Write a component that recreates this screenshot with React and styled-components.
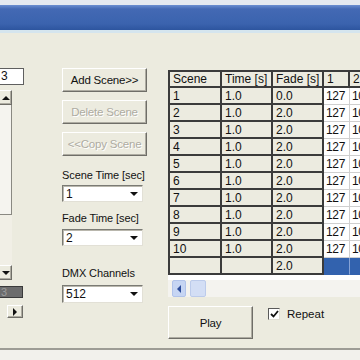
import styled, { createGlobalStyle } from "styled-components";

const GlobalStyle = createGlobalStyle`
  html, body { margin: 0; padding: 0; }
  body {
    width: 360px;
    height: 360px;
    overflow: hidden;
    background: #f2f1ec;
    font-family: "Liberation Sans", Arial, sans-serif;
    font-size: 11px;
    color: #111;
  }
`;

const Window = styled.div`
  width: 360px;
  height: 360px;
  display: flex;
  flex-direction: column;
  overflow: hidden;
`;

const TopStrip = styled.div`
  height: 5px;
  background: #e4e9f0;
`;

const TitleBar = styled.div`
  height: 25px;
  background: linear-gradient(#6b8fd1 0, #4369b4 4px, #3b63ae 75%, #2d559f 100%);
`;

const TitleEdge = styled.div`
  height: 3px;
  background: #d5e5ee;
`;

const Panel = styled.div`
  height: 315px;
  background: #ecebdf;
  display: flex;
  align-items: flex-start;
  overflow: hidden;
`;

const BottomEdge = styled.div`
  height: 2px;
  background: #9d9c95;
`;

const raised = `
  border: 1px solid;
  border-color: #ffffff #6f6e68 #6f6e68 #ffffff;
  box-shadow: inset -1px -1px #aeaca2;
`;

const Tri = styled.span`
  width: 0;
  height: 0;
  border-style: solid;
  ${(p) =>
    p.$dir === "up"
      ? "border-width: 0 4px 4px 4px; border-color: transparent transparent #111 transparent;"
      : p.$dir === "down"
      ? "border-width: 4px 4px 0 4px; border-color: #111 transparent transparent transparent;"
      : p.$dir === "right"
      ? "border-width: 4px 0 4px 4px; border-color: transparent transparent transparent #111;"
      : "border-width: 4px 4px 4px 0; border-color: transparent #2c4c9a transparent transparent;"}
`;

/* left column, mostly cut off by the window edge */
const LeftCol = styled.div`
  width: 24px;
  flex: none;
  margin-top: 35px;
  display: flex;
  flex-direction: column;
`;

const SpinInput = styled.div`
  height: 17px;
  box-sizing: border-box;
  border: 1px solid #5f5f5f;
  border-left: none;
  background: #fff;
  padding-left: 1px;
  line-height: 15px;
  font-size: 12px;
`;

const ListBar = styled.div`
  margin-top: 5px;
  width: 12px;
  height: 190px;
  display: flex;
  flex-direction: column;
`;

const ScrollBtn = styled.div`
  height: 15px;
  flex: none;
  box-sizing: border-box;
  background: #ecebdf;
  ${raised}
  border-left: none;
  display: flex;
  align-items: center;
  justify-content: center;
`;

const Thumb = styled.div`
  height: 110px;
  flex: none;
  box-sizing: border-box;
  background: #f5f4ef;
  border-right: 1px solid #8a8982;
  border-bottom: 1px solid #8a8982;
`;

const Track = styled.div`
  flex: 1;
  background: #f1efe6;
`;

const DarkField = styled.div`
  margin-top: 6px;
  width: 23px;
  height: 12px;
  box-sizing: border-box;
  background: #6c6c6c;
  border: 1px solid #3a3a3a;
  border-left: none;
  color: #9c9c9c;
  font-size: 11px;
  line-height: 10px;
  padding-left: 1px;
`;

const HScrollRow = styled.div`
  margin-top: 7px;
  width: 23px;
  height: 13px;
  display: flex;
  justify-content: flex-end;
`;

const SmallBtn = styled.div`
  width: 16px;
  box-sizing: border-box;
  background: #ecebdf;
  ${raised}
  display: flex;
  align-items: center;
  justify-content: center;
`;

/* middle column */
const MidCol = styled.div`
  margin-left: 38px;
  margin-top: 35px;
  width: 85px;
  flex: none;
  display: flex;
  flex-direction: column;
`;

const ButtonStack = styled.div`
  display: flex;
  flex-direction: column;
  gap: 8px;
`;

const ActionButton = styled.div`
  width: 85px;
  height: ${(p) => p.$h || 24}px;
  box-sizing: border-box;
  background: #ecebdf;
  ${raised}
  display: flex;
  align-items: center;
  justify-content: center;
  font-size: 11.5px;
  letter-spacing: -0.2px;
  color: ${(p) => (p.$disabled ? "#aeaca2" : "#111")};
  text-shadow: ${(p) => (p.$disabled ? "1px 1px #ffffff" : "none")};
`;

const FieldLabel = styled.div`
  margin-top: ${(p) => p.$mt}px;
  height: 14px;
  line-height: 14px;
  white-space: nowrap;
  letter-spacing: -0.1px;
`;

const Combo = styled.div`
  margin-top: ${(p) => p.$mt}px;
  width: 81px;
  height: ${(p) => p.$h || 17}px;
  box-sizing: border-box;
  background: #fff;
  border: 1px solid;
  border-color: #7a7a74 #e2e0d6 #e2e0d6 #7a7a74;
  box-shadow: inset 1px 1px #b9b7ad;
  display: flex;
  align-items: center;
  justify-content: space-between;
  padding: 0 4px 0 3px;
  font-size: 12px;
`;

/* table column */
const TableCol = styled.div`
  margin-left: 21px;
  margin-top: 37px;
  flex: 1;
  min-width: 0;
  display: flex;
  flex-direction: column;
`;

const GridBox = styled.div`
  height: 227px;
  background: #fff;
  display: flex;
  flex-direction: column;
  overflow: hidden;
`;

const Grid = styled.div`
  display: grid;
  grid-template-columns: 52px 51px 51px 26px 60px;
  grid-auto-rows: 17px;
  grid-template-rows: 16px;
  border-left: 2px solid #3b3b3b;
  border-top: 2px solid #3b3b3b;
  width: max-content;
  font-size: 12px;
`;

const cellTheme = {
  fixed: "background: #ecebe0; border-right: 2px solid #3b3b3b; border-bottom: 2px solid #3b3b3b;",
  head: "background: #ecebe0; border-right: 2px solid #3b3b3b; border-bottom: 2px solid #3b3b3b;",
  data: "background: #ffffff; border-right: 1px solid #cfcfcf; border-bottom: 1px solid #cfcfcf; padding-left: 2px; letter-spacing: -0.3px;",
  sel: "background: #3262ae; border-right: 1px solid #86a3d6; border-bottom: 1px solid #3262ae;",
};

const Cell = styled.div`
  box-sizing: border-box;
  padding-left: 3px;
  white-space: nowrap;
  overflow: hidden;
  display: flex;
  align-items: center;
  ${(p) => cellTheme[p.$kind]}
`;

const WhiteGap = styled.div`
  flex: 1;
`;

const HScroll = styled.div`
  height: 17px;
  flex: none;
  background: #f4f3ef;
  display: flex;
  align-items: stretch;
  padding-left: 4px;
  gap: 4px;
`;

const HArrow = styled.div`
  width: 14px;
  box-sizing: border-box;
  background: #c6d5f3;
  border: 1px solid #b1c3ea;
  border-radius: 2px;
  display: flex;
  align-items: center;
  justify-content: center;
`;

const HThumb = styled.div`
  width: 16px;
  box-sizing: border-box;
  background: #d3def5;
  border: 1px solid #bccbeb;
  border-radius: 2px;
`;

const BottomRow = styled.div`
  margin-top: 9px;
  display: flex;
  align-items: flex-start;
`;

const Repeat = styled.label`
  margin-left: 15px;
  margin-top: 2px;
  display: flex;
  align-items: center;
  gap: 7px;
  font-size: 11.5px;
`;

const CheckBox = styled.span`
  width: 12px;
  height: 12px;
  box-sizing: border-box;
  background: #fff;
  border: 1px solid;
  border-color: #5a5a5a #e0ded4 #e0ded4 #5a5a5a;
  display: flex;
  align-items: center;
  justify-content: center;
`;

const rows = [
  ["1", "1.0", "0.0"],
  ["2", "1.0", "2.0"],
  ["3", "1.0", "2.0"],
  ["4", "1.0", "2.0"],
  ["5", "1.0", "2.0"],
  ["6", "1.0", "2.0"],
  ["7", "1.0", "2.0"],
  ["8", "1.0", "2.0"],
  ["9", "1.0", "2.0"],
  ["10", "1.0", "2.0"],
];

export default function App() {
  return (
    <Window>
      <GlobalStyle />
      <TopStrip />
      <TitleBar />
      <TitleEdge />
      <Panel>
        <LeftCol>
          <SpinInput>3</SpinInput>
          <ListBar>
            <ScrollBtn><Tri $dir="up" /></ScrollBtn>
            <Thumb />
            <Track />
            <ScrollBtn><Tri $dir="down" /></ScrollBtn>
          </ListBar>
          <DarkField>3</DarkField>
          <HScrollRow>
            <SmallBtn><Tri $dir="right" /></SmallBtn>
          </HScrollRow>
        </LeftCol>

        <MidCol>
          <ButtonStack>
            <ActionButton>Add Scene&gt;&gt;</ActionButton>
            <ActionButton $disabled>Delete Scene</ActionButton>
            <ActionButton $disabled>&lt;&lt;Copy Scene</ActionButton>
          </ButtonStack>
          <FieldLabel $mt={12}>Scene Time [sec]</FieldLabel>
          <Combo $mt={3}>1<Tri $dir="down" /></Combo>
          <FieldLabel $mt={9}>Fade Time [sec]</FieldLabel>
          <Combo $mt={4}>2<Tri $dir="down" /></Combo>
          <FieldLabel $mt={20}>DMX Channels</FieldLabel>
          <Combo $mt={5} $h={18}>512<Tri $dir="down" /></Combo>
        </MidCol>

        <TableCol>
          <GridBox>
            <Grid>
              <Cell $kind="head">Scene</Cell>
              <Cell $kind="head">Time [s]</Cell>
              <Cell $kind="head">Fade [s]</Cell>
              <Cell $kind="head">1</Cell>
              <Cell $kind="head">2</Cell>
              {rows.map((r) => [
                <Cell key={r[0] + "a"} $kind="fixed">{r[0]}</Cell>,
                <Cell key={r[0] + "b"} $kind="fixed">{r[1]}</Cell>,
                <Cell key={r[0] + "c"} $kind="fixed">{r[2]}</Cell>,
                <Cell key={r[0] + "d"} $kind="data">127</Cell>,
                <Cell key={r[0] + "e"} $kind="data">100</Cell>,
              ])}
              <Cell $kind="fixed" />
              <Cell $kind="fixed" />
              <Cell $kind="fixed">2.0</Cell>
              <Cell $kind="sel" />
              <Cell $kind="sel" />
            </Grid>
            <WhiteGap />
            <HScroll>
              <HArrow><Tri $dir="left" /></HArrow>
              <HThumb />
            </HScroll>
          </GridBox>
          <BottomRow>
            <ActionButton $h={33}>Play</ActionButton>
            <Repeat>
              <CheckBox>
                <svg width="9" height="8" viewBox="0 0 9 8">
                  <polyline points="1,4 3.5,6.5 8,1" fill="none" stroke="#111" strokeWidth="1.8" />
                </svg>
              </CheckBox>
              Repeat
            </Repeat>
          </BottomRow>
        </TableCol>
      </Panel>
      <BottomEdge />
    </Window>
  );
}
